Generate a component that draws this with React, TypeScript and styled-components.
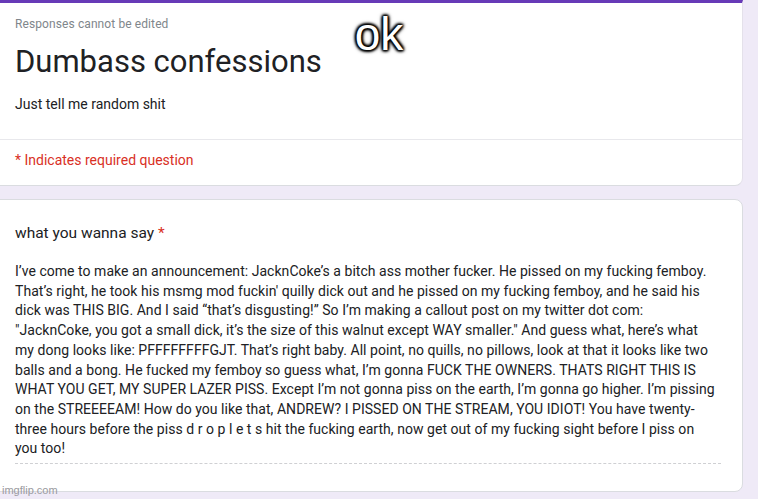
import React from "react";
import styled, { createGlobalStyle } from "styled-components";

const GlobalStyle = createGlobalStyle`
  html, body {
    margin: 0;
    padding: 0;
    background: #efeaf7;
    font-family: Roboto, "Liberation Sans", Arial, sans-serif;
    color: #202124;
  }
  * { box-sizing: border-box; }
`;

const Page = styled.div`
  position: relative;
  width: 758px;
  height: 499px;
  overflow: hidden;
  background: #efeaf7;
  display: flex;
  flex-direction: column;
  gap: 13px;
`;

const Card = styled.section<{ $accent?: boolean }>`
  margin-left: -12px;
  width: 755px;
  background: #fff;
  border: 1px solid #dadce0;
  border-radius: ${(p) => (p.$accent ? "0 0 8px 0" : "8px")};
  border-top: ${(p) => (p.$accent ? "3px solid #673ab7" : "1px solid #dadce0")};
  ${(p) => (p.$accent ? "border-right-color: #e4e1ea;" : "")}
`;

const HeaderTop = styled.div`
  padding: 11px 0 0 26px;
  height: 136px;
  display: flex;
  flex-direction: column;
`;

const Notice = styled.div`
  font-size: 12px;
  color: #80868b;
  letter-spacing: 0.1px;
  line-height: 20px;
`;

const Title = styled.h1`
  margin: 8px 0 0;
  font-weight: 400;
  font-size: 31px;
  line-height: 40px;
  color: #202124;
`;

const Description = styled.div`
  margin-top: 12px;
  font-size: 14px;
  line-height: 20px;
  color: #202124;
`;

const Divider = styled.div`
  height: 1px;
  background: #e8e8ec;
`;

const Required = styled.div`
  padding: 10px 0 15px 26px;
  font-size: 14px;
  line-height: 20px;
  color: #d93025;
`;

const QuestionCard = styled(Card)`
  height: 293px;
  padding: 21px 0 0 26px;
`;

const Question = styled.div`
  font-size: 15.5px;
  line-height: 24px;
  color: #202124;
`;

const Star = styled.span`
  color: #d93025;
`;

const Answer = styled.div`
  margin-top: 17px;
  width: 706px;
  font-size: 14px;
  line-height: 19.7px;
  color: #202124;
  letter-spacing: 0.04px;
  padding-bottom: 4px;
  border-bottom: 1px dashed #cfd0d3;
`;

const AnswerLine = styled.div`
  white-space: nowrap;
`;

const Caption = styled.div`
  position: absolute;
  top: 8px;
  left: 0;
  right: 0;
  text-align: center;
  font-family: "Liberation Sans", Arial, sans-serif;
  font-size: 46px;
  line-height: 52px;
  color: #fff;
  text-shadow:
    0 0 2px #000, 0 0 3px #000, 0 0 5px #000,
    1px 1px 3px #000, -1px -1px 3px #000, 1px -1px 3px #000, -1px 1px 3px #000;
  pointer-events: none;
`;

const Watermark = styled.div`
  position: absolute;
  left: 2px;
  bottom: 3px;
  font-family: "Liberation Sans", Arial, sans-serif;
  font-size: 11px;
  color: #9a9aa0;
`;

const lines = [
  "I’ve come to make an announcement: JacknCoke’s a bitch ass mother fucker. He pissed on my fucking femboy.",
  "That’s right, he took his msmg mod fuckin' quilly dick out and he pissed on my fucking femboy, and he said his",
  "dick was THIS BIG. And I said “that’s disgusting!” So I’m making a callout post on my twitter dot com:",
  "\"JacknCoke, you got a small dick, it’s the size of this walnut except WAY smaller.\" And guess what, here’s what",
  "my dong looks like: PFFFFFFFFGJT. That’s right baby. All point, no quills, no pillows, look at that it looks like two",
  "balls and a bong. He fucked my femboy so guess what, I’m gonna FUCK THE OWNERS. THATS RIGHT THIS IS",
  "WHAT YOU GET, MY SUPER LAZER PISS. Except I’m not gonna piss on the earth, I’m gonna go higher. I’m pissing",
  "on the STREEEEAM! How do you like that, ANDREW? I PISSED ON THE STREAM, YOU IDIOT! You have twenty-",
  "three hours before the piss d r o p l e t s hit the fucking earth, now get out of my fucking sight before I piss on",
  "you too!",
];

export default function App() {
  return (
    <>
      <GlobalStyle />
      <Page>
        <Card $accent>
          <HeaderTop>
            <Notice>Responses cannot be edited</Notice>
            <Title>Dumbass confessions</Title>
            <Description>Just tell me random shit</Description>
          </HeaderTop>
          <Divider />
          <Required>* Indicates required question</Required>
        </Card>
        <QuestionCard>
          <Question>
            what you wanna say <Star>*</Star>
          </Question>
          <Answer>
            {lines.map((l, i) => (
              <AnswerLine key={i}>{l}</AnswerLine>
            ))}
          </Answer>
        </QuestionCard>
        <Caption>ok</Caption>
        <Watermark>imgflip.com</Watermark>
      </Page>
    </>
  );
}
